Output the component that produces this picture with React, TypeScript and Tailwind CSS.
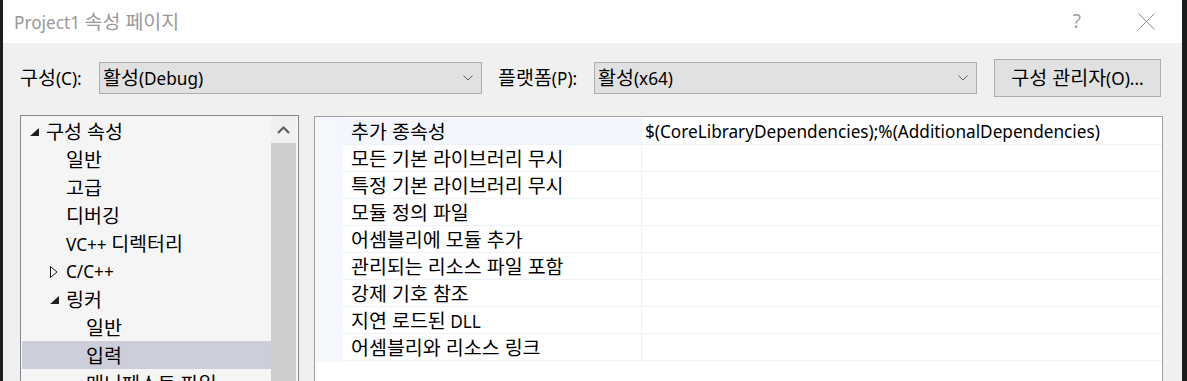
import React from 'react'

const treeItems = [
  { label: '구성 속성', level: 0, arrow: 'open' },
  { label: '일반', level: 1 },
  { label: '고급', level: 1 },
  { label: '디버깅', level: 1 },
  { label: 'VC++ 디렉터리', level: 1 },
  { label: 'C/C++', level: 1, arrow: 'closed' },
  { label: '링커', level: 1, arrow: 'open' },
  { label: '일반', level: 2 },
  { label: '입력', level: 2, selected: true },
  { label: '매니페스트 파일', level: 2 },
]

const props = [
  { name: '추가 종속성', value: '$(CoreLibraryDependencies);%(AdditionalDependencies)' },
  { name: '모든 기본 라이브러리 무시', value: '' },
  { name: '특정 기본 라이브러리 무시', value: '' },
  { name: '모듈 정의 파일', value: '' },
  { name: '어셈블리에 모듈 추가', value: '' },
  { name: '관리되는 리소스 파일 포함', value: '' },
  { name: '강제 기호 참조', value: '' },
  { name: '지연 로드된 DLL', value: '' },
  { name: '어셈블리와 리소스 링크', value: '' },
]

// Hangul runs render a bit larger, like Malgun Gothic next to Segoe UI
function T({ t }: { t: string }) {
  const parts = t.split(/([\uAC00-\uD7A3]+(?:\s+[\uAC00-\uD7A3]+)*)/)
  return (
    <span className="whitespace-nowrap">
      {parts.map((p, i) =>
        /[\uAC00-\uD7A3]/.test(p) ? (
          <span key={i} className="text-[19.5px]">{p}</span>
        ) : (
          <span key={i}>{p}</span>
        )
      )}
    </span>
  )
}

function Chevron() {
  return (
    <svg width="10" height="6" viewBox="0 0 10 6" className="mr-[8px]">
      <path d="M0.5 0.5 L5 5 L9.5 0.5" fill="none" stroke="#606060" strokeWidth="1" />
    </svg>
  )
}

function Combo({ text }: { text: string }) {
  return (
    <div className="w-[383px] h-[32px] bg-[#e1e1e1] border border-[#adadad] flex items-center justify-between pl-[3px]">
      <T t={text} />
      <Chevron />
    </div>
  )
}

function Arrow({ kind }: { kind?: string }) {
  if (kind === 'open') {
    return (
      <svg width="9" height="8" viewBox="0 0 9 8">
        <polygon points="9,0 9,8 0,8" fill="#1e1e1e" />
      </svg>
    )
  }
  if (kind === 'closed') {
    return (
      <svg width="8" height="12" viewBox="0 0 8 12">
        <polygon points="0.5,0.5 7,6 0.5,11.5" fill="none" stroke="#1e1e1e" strokeWidth="1" />
      </svg>
    )
  }
  return null
}

export default function App() {
  return (
    <div className="w-[1187px] h-[381px] overflow-hidden bg-[#1c1c1c] flex text-[17.2px] text-black font-['Noto_Sans','Noto_Sans_CJK_KR',sans-serif]">
      <div className="w-[3px] shrink-0" />
      <div className="w-[1179px] shrink-0 flex flex-col bg-[#f0f0f0]">
        {/* Title bar */}
        <div className="h-[43px] shrink-0 bg-white flex items-center">
          <span className="ml-[11px] text-[#999999]">
            <T t="Project1 속성 페이지" />
          </span>
          <span className="ml-auto text-[#a0a0a0] text-[19px]">?</span>
          <svg width="17" height="17" viewBox="0 0 17 17" className="ml-[57px] mr-[27px]">
            <path d="M0.5 0.5 L16.5 16.5 M16.5 0.5 L0.5 16.5" stroke="#8a8a8a" strokeWidth="1" />
          </svg>
        </div>

        {/* Configuration row */}
        <div className="mt-[16px] h-[38px] shrink-0 flex items-center pl-[17px]">
          <span className="w-[79px]">
            <T t="구성(C):" />
          </span>
          <Combo text="활성(Debug)" />
          <span className="ml-[16px] w-[96px]">
            <T t="플랫폼(P):" />
          </span>
          <Combo text="활성(x64)" />
          <button className="ml-[17px] w-[167px] h-[38px] bg-[#e1e1e1] border border-[#adadad] flex items-center justify-center">
            <T t="구성 관리자(O)..." />
          </button>
        </div>

        {/* Panels */}
        <div className="mt-[18px] flex-1 flex pl-[17px] items-start">
          {/* Tree */}
          <div className="w-[279px] h-[280px] border border-[#828790] bg-[#f5f5f5] flex">
            <div className="w-[250px] pl-[1px] pt-[1px]">
              {treeItems.map((it, i) => (
                <div
                  key={i}
                  className={'h-[28px] flex items-center pt-[1px] ' + (it.selected ? 'bg-[#cccedb]' : '')}
                >
                  <div
                    className={
                      'shrink-0 flex items-center ' +
                      (it.level === 0 ? 'pl-[8px]' : it.level === 1 ? 'pl-[28px]' : 'pl-[48px]')
                    }
                  >
                    <div className="w-[16px] h-[12px] flex items-center">
                      <Arrow kind={it.arrow} />
                    </div>
                  </div>
                  <T t={it.label} />
                </div>
              ))}
            </div>
            <div className="w-[25px] flex flex-col">
              <div className="h-[27px] bg-[#f0f0f0] flex items-center justify-center">
                <svg width="13" height="8" viewBox="0 0 13 8">
                  <path d="M1 7 L6.5 1.5 L12 7" fill="none" stroke="#606060" strokeWidth="2.2" />
                </svg>
              </div>
              <div className="flex-1 bg-[#cdcdcd]" />
            </div>
            <div className="w-[2px]" />
          </div>

          {/* Property grid */}
          <div className="ml-[15px] mt-[1px] w-[849px] h-[280px] border border-[#a0a0a0] bg-white flex">
            <div className="w-[28px] h-[245px] bg-[#f4f7fc]" />
            <div className="flex-1 pt-[1px]">
              {props.map((p, i) => (
                <div key={i} className="h-[27px] border-b border-[#edf1f8] flex">
                  <div
                    className={
                      'w-[299px] border-r border-[#edf1f8] pl-[8px] pt-[2px] flex items-center ' +
                      (i === 0 ? 'bg-[#f3f6fc]' : '')
                    }
                  >
                    <T t={p.name} />
                  </div>
                  <div className="flex-1 pl-[3px] pt-[2px] flex items-center">
                    <T t={p.value} />
                  </div>
                </div>
              ))}
            </div>
          </div>
        </div>
      </div>
      <div className="flex-1" />
    </div>
  )
}
